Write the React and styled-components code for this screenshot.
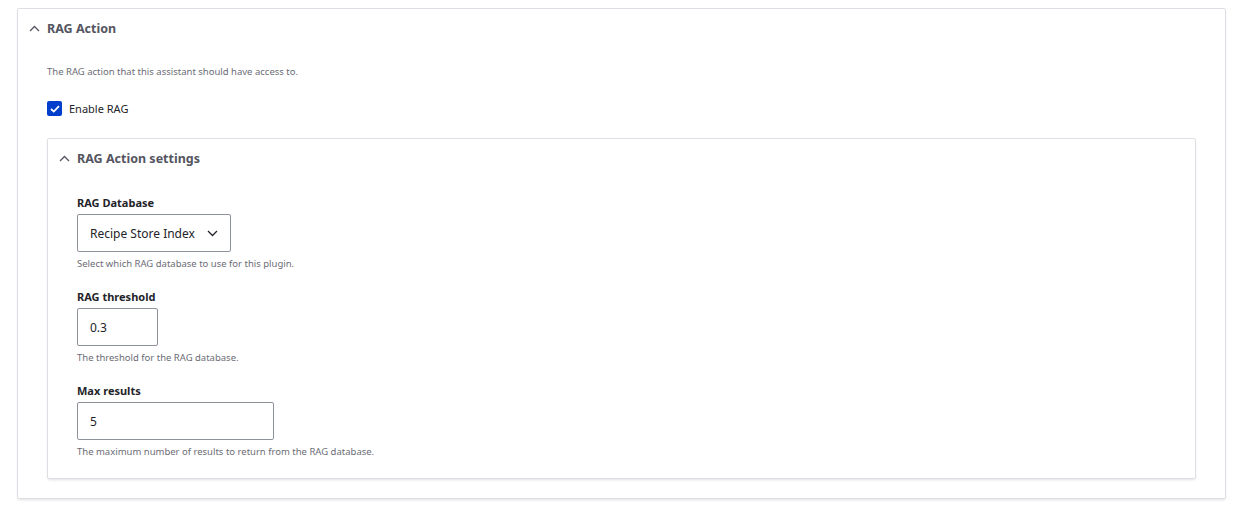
import styled, { createGlobalStyle } from "styled-components";

const GlobalStyle = createGlobalStyle`
  body {
    margin: 0;
    background: #fff;
    font-family: "Noto Sans", "Open Sans", sans-serif;
    color: #232429;
  }
`;

const Page = styled.div`
  padding: 8px 30px 6px 17px;
`;

const Details = styled.div`
  border: 1px solid #dedfe4;
  border-radius: 2px;
  background: #fff;
  box-shadow: 0 2px 3px -1px rgba(0, 0, 0, 0.12);
`;

const Summary = styled.div`
  display: flex;
  align-items: center;
  gap: 7px;
  height: 38px;
  padding: 0 0 0 11px;
  font-size: 12.5px;
  font-weight: 700;
  color: #545560;
`;

const Body = styled.div`
  padding: ${({ $inner }) => ($inner ? "19px 16px 19px 29px" : "18px 29px 19px 29px")};
`;

const Description = styled.div`
  font-size: 9.5px;
  color: #6b6c76;
  line-height: 14px;
`;

const CheckRow = styled.label`
  display: flex;
  align-items: center;
  gap: 7px;
  margin: 22px 0 22px;
  font-size: 11px;
  line-height: 15px;
  color: #232429;
`;

const Box = styled.span`
  width: 15px;
  height: 15px;
  border-radius: 2px;
  background: #003ecc;
  display: flex;
  align-items: center;
  justify-content: center;
`;

const Field = styled.div`
  & + & {
    margin-top: 19px;
  }
`;

const Label = styled.div`
  font-size: 11px;
  font-weight: 700;
  color: #232429;
  line-height: 14px;
  margin-bottom: 4px;
`;

const Control = styled.div`
  box-sizing: border-box;
  width: ${({ $w }) => $w}px;
  height: 38px;
  border: 1px solid #8e929c;
  border-radius: 2px;
  display: flex;
  align-items: center;
  justify-content: space-between;
  padding: 0 12px 0 12px;
  font-size: 12px;
  color: #232429;
  margin-bottom: 5px;
`;

const Chevron = ({ down, color = "#545560" }) => (
  <svg width="11" height="7" viewBox="0 0 11 7">
    <path
      d={down ? "M1 1l4.5 4.5L10 1" : "M1 6l4.5-4.5L10 6"}
      fill="none"
      stroke={color}
      strokeWidth="1.3"
    />
  </svg>
);

function App() {
  return (
    <Page>
      <GlobalStyle />
      <Details>
        <Summary>
          <Chevron />
          RAG Action
        </Summary>
        <Body>
          <Description>The RAG action that this assistant should have access to.</Description>
          <CheckRow>
            <Box>
              <svg width="10" height="8" viewBox="0 0 10 8">
                <path d="M1 4l2.8 2.6L9 1.2" fill="none" stroke="#fff" strokeWidth="1.8" />
              </svg>
            </Box>
            Enable RAG
          </CheckRow>
          <Details>
            <Summary>
              <Chevron />
              RAG Action settings
            </Summary>
            <Body $inner>
              <Field>
                <Label>RAG Database</Label>
                <Control $w={154}>
                  Recipe Store Index
                  <Chevron down color="#232429" />
                </Control>
                <Description>Select which RAG database to use for this plugin.</Description>
              </Field>
              <Field>
                <Label>RAG threshold</Label>
                <Control $w={81}>0.3</Control>
                <Description>The threshold for the RAG database.</Description>
              </Field>
              <Field>
                <Label>Max results</Label>
                <Control $w={197}>5</Control>
                <Description>The maximum number of results to return from the RAG database.</Description>
              </Field>
            </Body>
          </Details>
        </Body>
      </Details>
    </Page>
  );
}

export default App;
